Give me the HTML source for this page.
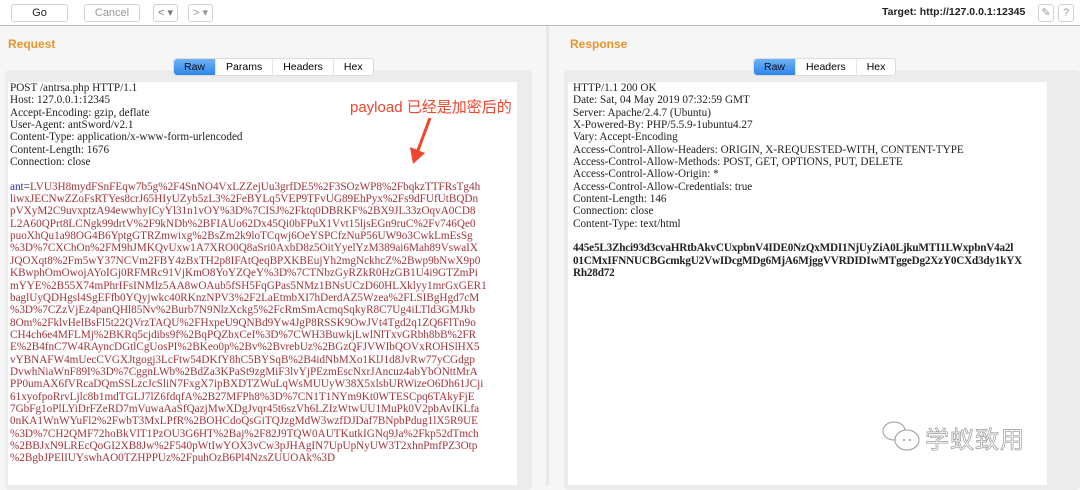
<!DOCTYPE html>
<html><head><meta charset="utf-8"><style>
*{margin:0;padding:0;box-sizing:border-box}
body{width:1080px;height:485px;background:#f6f6f6;position:relative;overflow:hidden;font-family:"Liberation Sans",sans-serif}
.tb{position:absolute;left:0;top:0;width:1080px;height:26px;background:#fff;border-bottom:1px solid #b8b8b8}
.btn{position:absolute;top:4px;height:18px;border:1px solid #d2d2d2;border-radius:3px;background:#fff;font-size:11px;text-align:center;line-height:16px;color:#222}
.title{position:absolute;top:37px;font-size:12px;font-weight:bold;color:#e8952e}
.tabs{position:absolute;z-index:5;top:58px;height:18px;display:flex;border:1px solid #dcdcdc;border-radius:3px;background:#fff;font-size:10.5px;line-height:16px}
.tabs div{padding:0 10px;border-right:1px solid #e4e4e4}
.tabs .on{background:linear-gradient(#6fb2f5,#2d86e8);color:#111;border-radius:3px 0 0 3px}
.frame{position:absolute;top:70px;background:#ececec;border-radius:4px}
.ta{position:absolute;top:82px;bottom:0;background:#fff;font-family:"Liberation Serif",serif;font-size:11.2px;line-height:12.35px;color:#222;white-space:pre;padding-top:0}
.red{color:#a0353a}
</style></head><body>
<div class="tb">
<div class="btn" style="left:11px;width:57px">Go</div>
<div class="btn" style="left:84px;width:56px;color:#999">Cancel</div>
<div class="btn" style="left:153px;width:25px;color:#777">&lt; ▾</div>
<div class="btn" style="left:188px;width:25px;color:#999">&gt; ▾</div>
<div style="position:absolute;left:882px;top:6px;font-size:10.5px;font-weight:bold;color:#222">Target: http://127.0.0.1:12345</div>
<div class="btn" style="left:1038px;width:16px;color:#999">✎</div>
<div class="btn" style="left:1058px;width:16px;color:#999">?</div>
</div>
<div class="title" style="left:8px">Request</div>
<div class="frame" style="left:5px;width:527px;height:420px"></div>
<div class="tabs" style="left:173px"><div class="on">Raw</div><div>Params</div><div>Headers</div><div style="border:0">Hex</div></div>
<div class="ta" style="left:8px;width:509px;padding-left:2px;top:82px">POST /antrsa.php HTTP/1.1
Host: 127.0.0.1:12345
Accept-Encoding: gzip, deflate
User-Agent: antSword/v2.1
Content-Type: application/x-www-form-urlencoded
Content-Length: 1676
Connection: close

<span style="color:#2a2aa8">ant</span>=<span class="red">LVU3H8mydFSnFEqw7b5g%2F4SnNO4VxLZZejUu3grfDE5%2F3SOzWP8%2FbqkzTTFRsTg4h
liwxJECNwZZoFsRTYes8crJ65HIyUZyb5zL3%2FeBYLq5VEP9TFvUG89EhPyx%2Fs9dFUfUtBQDn
pVXyM2C9uvxptzA94ewwhyICyYl31n1vOY%3D%7CISJ%2Fktq0DBRKF%2BX9JL33zOqvA0CD8
L2A60QPrt8LCNgk99drtV%2F9kNDb%2BFIAUo62Dx45Qi0bFPuX1Vvt15ljsEGn9ruC%2Fv746Qe0
puoXhQu1a98OG4B6YptgGTRZmwixg%2BsZm2k9loTCqwj6OeYSPCfzNuP56UW9o3CwkLmEsSg
%3D%7CXChOn%2FM9hJMKQvUxw1A7XRO0Q8aSri0AxbD8z5OitYyelYzM389ai6Mah89VswaIX
JQOXqt8%2Fm5wY37NCVm2FBY4zBxTH2p8IFAtQeqBPXKBEujYh2mgNckhcZ%2Bwp9bNwX9p0
KBwphOmOwojAYoIGj0RFMRc91VjKmO8YoYZQeY%3D%7CTNbzGyRZkR0HzGB1U4i9GTZmPi
mYYE%2B55X74mPhrIFsINMlz5AA8wOAub5fSH5FqGPas5NMz1BNsUCzD60HLXklyy1mrGxGER1
baglUyQDHgsl4SgEFfb0YQyjwkc40RKnzNPV3%2F2LaEtmbXI7hDerdAZ5Wzea%2FLSIBgHgd7cM
%3D%7CZzVjEz4panQHl85Nv%2Burb7N9NlzXckg5%2FcRmSmAcmqSqkyR8C7Ug4iLTld3GMJkb
8Om%2FklvHelBsFl5t22QVrzTAQU%2FHxpeU9QNBd9Yw4JgP8RSSK9OwJVt4Tgd2q1ZQ6FlTn9o
CH4ch6e4MFLMj%2BKRq5cjdibs9f%2BqPQZbxCeI%3D%7CWH3BuwkjLwlNlTxvGRbh8bB%2FR
E%2B4fnC7W4RAyncDGtlCgUosPI%2BKeo0p%2Bv%2BvrebUz%2BGzQFJVWIbQOVxROHSlHX5
vYBNAFW4mUecCVGXJtgogj3LcFtw54DKfY8hC5BYSqB%2B4idNbMXo1KlJ1d8JvRw77yCGdgp
DvwhNiaWnF89I%3D%7CggnLWb%2BdZa3KPaSt9zgMiF3lvYjPEzmEscNxrJAncuz4abYbONttMrA
PP0umAX6fVRcaDQmSSLzcJcSliN7FxgX7ipBXDTZWuLqWsMUUyW38X5xlsbURWizeO6Dh61JCji
61xyofpoRrvLjlc8b1mdTGLJ7lZ6fdqfA%2B27MFPh8%3D%7CN1T1NYm9Kt0WTESCpq6TAkyFjE
7GbFg1oPlLYiDrFZeRD7mVuwaAaSfQazjMwXDgJvqr45t6szVh6LZIzWtwUU1MuPk0V2pbAvIKLfa
0nKA1WnWYuFl2%2FwbT3MxLPfR%2BOHCdoQsGiTQJzgMdW3wzfDJDaf7BNpbPdug1lX5R9UE
%3D%7CH2QMF72hoBkVlT1PzOU3G6HT%2Baj%2F82J9TQW0AUTKutkIGNq9Ja%2Fkp52dTmch
%2BBJxN9LREcQoGI2XB8Jw%2F540pWtIwYOX3vCw3pJHAgIN7UpUpNyUW3T2xhnPmfPZ3Otp
%2BgbJPElIUYswhAO0TZHPPUz%2FpuhOzB6Pl4NzsZUUOAk%3D</span></div>
<div style="position:absolute;left:350px;top:96px;font-family:'Liberation Sans','Noto Sans CJK SC',sans-serif;font-size:15px;color:#f0452e">payload 已经是加密后的</div>
<svg style="position:absolute;left:405px;top:115px" width="40" height="52"><line x1="25" y1="3" x2="12" y2="38" stroke="#f0452e" stroke-width="3"/><polygon points="5,32 20,38 8,49" fill="#f0452e"/></svg>
<div style="position:absolute;left:546px;top:26px;width:3px;height:459px;background:#e8e8e8"></div>
<div class="title" style="left:570px">Response</div>
<div class="frame" style="left:564px;width:516px;height:420px"></div>
<div class="tabs" style="left:753px"><div class="on">Raw</div><div>Headers</div><div style="border:0">Hex</div></div>
<div class="ta" style="left:568px;width:479px;padding-left:5px">HTTP/1.1 200 OK
Date: Sat, 04 May 2019 07:32:59 GMT
Server: Apache/2.4.7 (Ubuntu)
X-Powered-By: PHP/5.5.9-1ubuntu4.27
Vary: Accept-Encoding
Access-Control-Allow-Headers: ORIGIN, X-REQUESTED-WITH, CONTENT-TYPE
Access-Control-Allow-Methods: POST, GET, OPTIONS, PUT, DELETE
Access-Control-Allow-Origin: *
Access-Control-Allow-Credentials: true
Content-Length: 146
Connection: close
Content-Type: text/html

<b style="letter-spacing:-0.2px">445e5L3Zhci93d3cvaHRtbAkvCUxpbnV4IDE0NzQxMDI1NjUyZiA0LjkuMTI1LWxpbnV4a2l
01CMxIFNNUCBGcmkgU2VwIDcgMDg6MjA6MjggVVRDIDIwMTggeDg2XzY0CXd3dy1kYX
Rh28d72</b></div>
<svg style="position:absolute;left:880px;top:418px" width="42" height="40"><ellipse cx="14" cy="13" rx="11" ry="9" fill="#fff" stroke="#999"/><ellipse cx="27" cy="22" rx="12" ry="10" fill="#fff" stroke="#999"/><circle cx="24" cy="22" r="1" fill="#999"/><circle cx="30" cy="22" r="1" fill="#999"/></svg>
<div style="position:absolute;left:925px;top:420px;font-family:'Noto Sans CJK SC',sans-serif;font-size:24px;color:#fff;-webkit-text-stroke:0.7px #999;letter-spacing:1px">学蚁致用</div>
</body></html>
